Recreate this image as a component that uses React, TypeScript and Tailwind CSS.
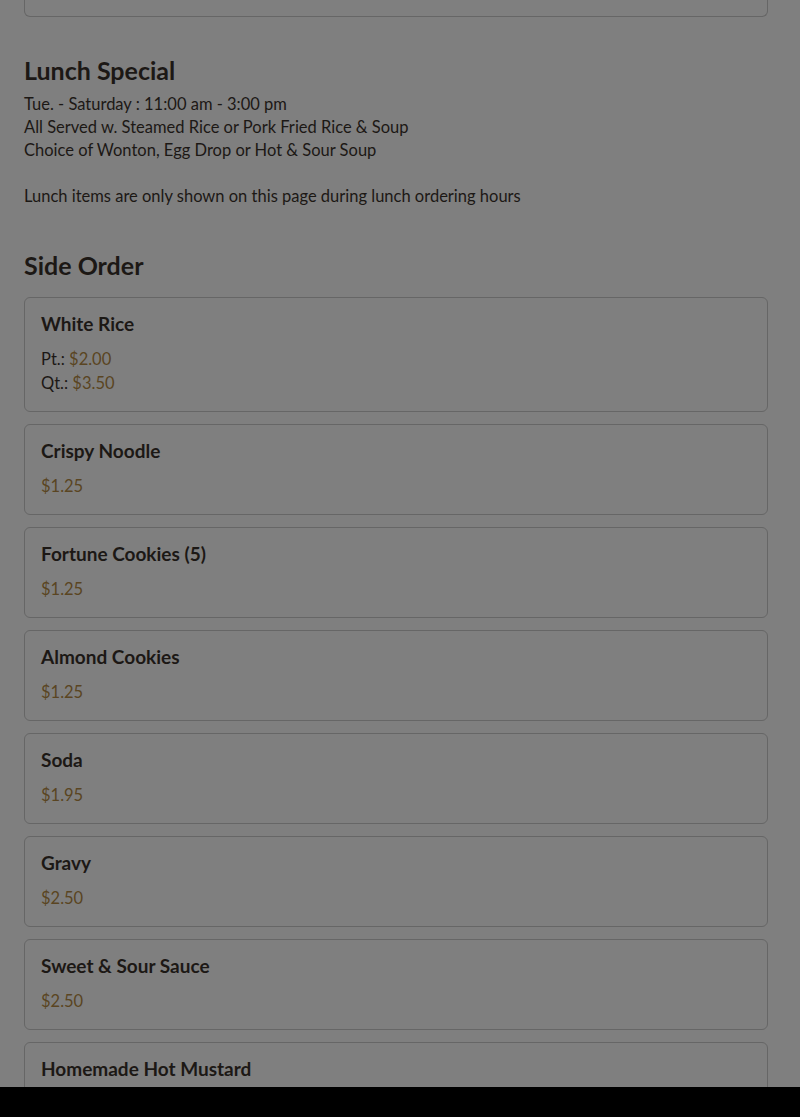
import React from "react";

type Item = { name: string; prices: { label?: string; value: string }[] };

const items: Item[] = [
    { name: "White Rice", prices: [{ label: "Pt.:", value: "$2.00" }, { label: "Qt.:", value: "$3.50" }] },
    { name: "Crispy Noodle", prices: [{ value: "$1.25" }] },
    { name: "Fortune Cookies (5)", prices: [{ value: "$1.25" }] },
    { name: "Almond Cookies", prices: [{ value: "$1.25" }] },
    { name: "Soda", prices: [{ value: "$1.95" }] },
    { name: "Gravy", prices: [{ value: "$2.50" }] },
    { name: "Sweet & Sour Sauce", prices: [{ value: "$2.50" }] },
    { name: "Homemade Hot Mustard", prices: [{ value: "$2.50" }] },
];

function MenuCard({ item }: { item: Item }) {
    return (
        <div className="border border-[#666666] rounded-[6px] px-4 pt-[14px] pb-4">
            <h4 className="text-[19px] leading-6 font-bold text-[#1c1815]">{item.name}</h4>
            <div className="mt-[11px] text-[16.5px] leading-6">
                {item.prices.map((p, i) => (
                    <div key={i}>
                        {p.label && <span className="text-[#1c1815]">{p.label} </span>}
                        <span className="text-[#5a4522]">{p.value}</span>
                    </div>
                ))}
            </div>
        </div>
    );
}

export default function App() {
    return (
        <div
            className="h-[1117px] overflow-hidden bg-[#7f7f7f] text-[#1c1815] pl-6 pr-8"
            style={{ fontFamily: "Lato, 'Noto Sans', sans-serif" }}
        >
            <div className="h-[17px] border-x border-b border-[#666666] rounded-b-[6px]" />

            <section className="mt-[37px]">
                <h3 className="text-[25px] leading-8 font-bold">Lunch Special</h3>
                <div className="mt-[7px] text-[16.5px] leading-[23px]">
                    <p>Tue. - Saturday : 11:00 am - 3:00 pm</p>
                    <p>All Served w. Steamed Rice or Pork Fried Rice &amp; Soup</p>
                    <p>Choice of Wonton, Egg Drop or Hot &amp; Sour Soup</p>
                    <p>&nbsp;</p>
                    <p>Lunch items are only shown on this page during lunch ordering hours</p>
                </div>
            </section>

            <section className="mt-[41px]">
                <h3 className="text-[25px] leading-8 font-bold">Side Order</h3>
                <div className="mt-[16px] flex flex-col gap-3">
                    {items.map((it) => (
                        <MenuCard key={it.name} item={it} />
                    ))}
                </div>
            </section>

            <div className="fixed bottom-0 left-0 right-0 h-[30px] bg-black" />
        </div>
    );
}
